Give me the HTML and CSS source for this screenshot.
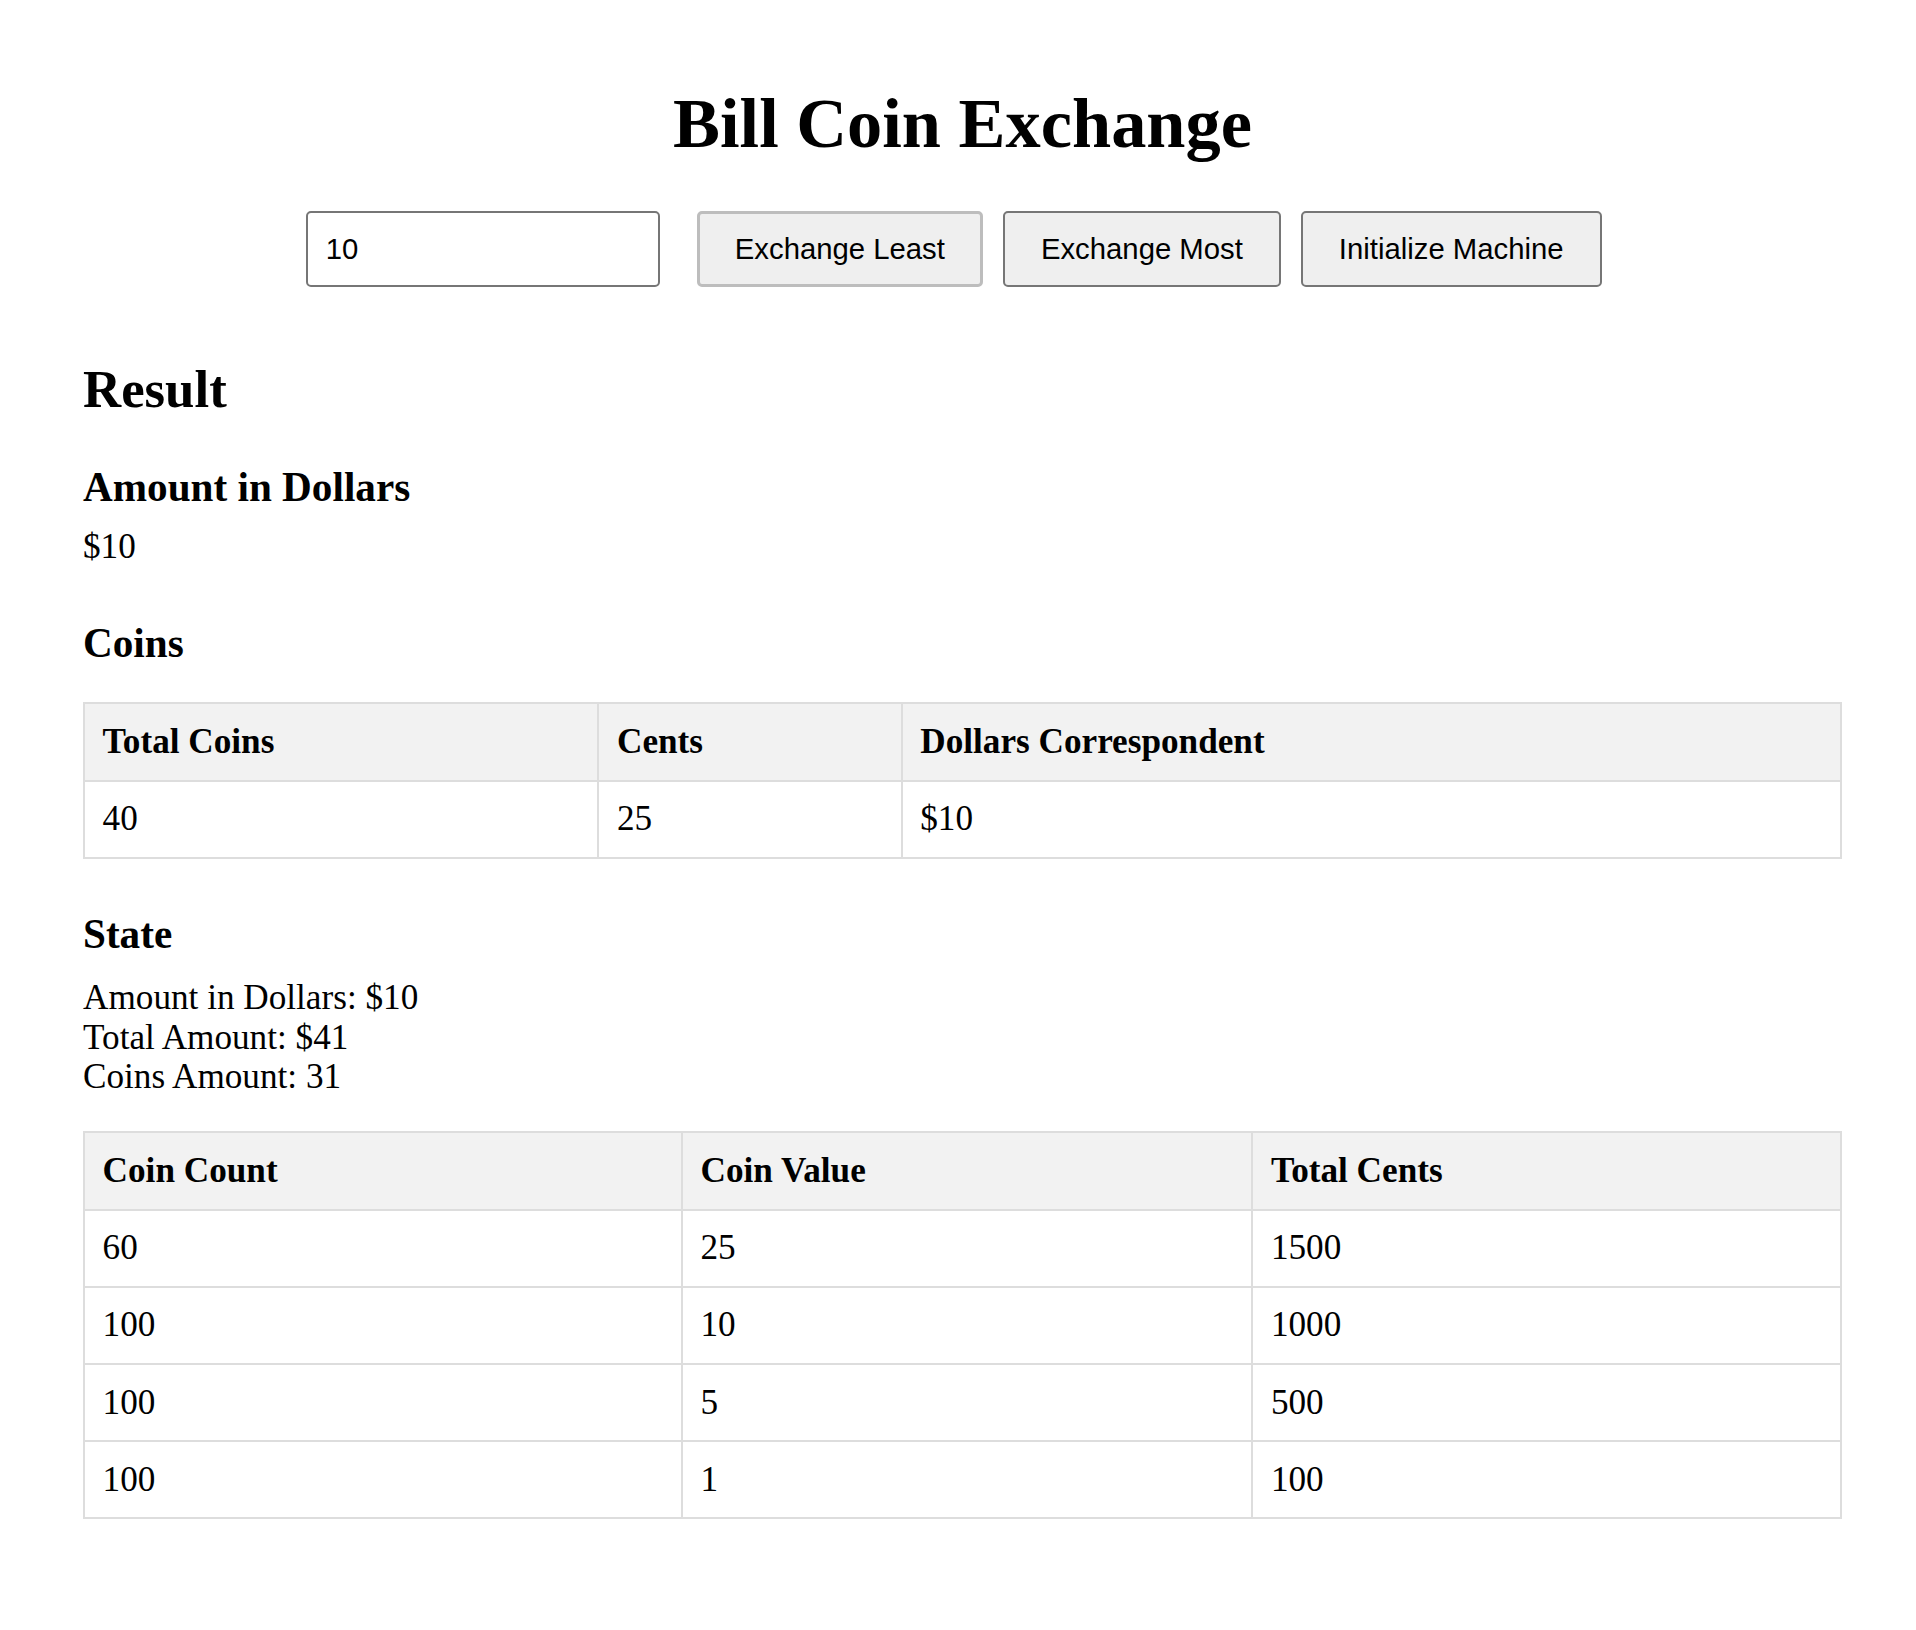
FILE: index.html
```html
<!DOCTYPE html>
<html lang="en">
<head>
<meta charset="utf-8">
<title>Bill Coin Exchange</title>
<link rel="stylesheet" href="styles.css">
</head>
<body>
<div class="page">
  <h1 class="title">Bill Coin Exchange</h1>
  <div class="controls">
    <input class="amount-input" type="text" value="10">
    <button class="btn btn-focused">Exchange Least</button>
    <button class="btn">Exchange Most</button>
    <button class="btn">Initialize Machine</button>
  </div>

  <h2 class="result-title">Result</h2>

  <h3 class="sub-title amount-title">Amount in Dollars</h3>
  <div class="value">$10</div>

  <h3 class="sub-title coins-title">Coins</h3>
  <table class="data-table coins-table">
    <thead>
      <tr><th>Total Coins</th><th>Cents</th><th>Dollars Correspondent</th></tr>
    </thead>
    <tbody>
      <tr><td>40</td><td>25</td><td>$10</td></tr>
    </tbody>
  </table>

  <h3 class="sub-title state-title">State</h3>
  <div class="state-lines">
    <div>Amount in Dollars: $10</div>
    <div>Total Amount: $41</div>
    <div>Coins Amount: 31</div>
  </div>

  <table class="data-table state-table">
    <thead>
      <tr><th>Coin Count</th><th>Coin Value</th><th>Total Cents</th></tr>
    </thead>
    <tbody>
      <tr><td>60</td><td>25</td><td>1500</td></tr>
      <tr><td>100</td><td>10</td><td>1000</td></tr>
      <tr><td>100</td><td>5</td><td>500</td></tr>
      <tr><td>100</td><td>1</td><td>100</td></tr>
    </tbody>
  </table>
</div>
</body>
</html>
```

FILE: styles.css
```css
html, body {
  background: #ffffff;
}

body {
  margin: 0;
  font-family: "Liberation Serif", "Times New Roman", serif;
  font-size: 35.2px;
  color: #000000;
}

.page {
  width: 1759px;
  margin-left: 83px;
  padding-bottom: 100px;
}

.title {
  margin: 0;
  padding-top: 82.8px;
  font-size: 70.4px;
  font-weight: bold;
  line-height: normal;
  text-align: center;
}

.controls {
  display: flex;
  justify-content: center;
  align-items: center;
  margin-top: 47.3px;
  padding-right: 17.6px;
}

.amount-input {
  box-sizing: border-box;
  width: 354px;
  height: 76px;
  margin: 0 37px 0 0;
  padding: 0 18px;
  border: 2px solid #767676;
  border-radius: 5px;
  background: #ffffff;
  font-family: "Liberation Sans", Arial, sans-serif;
  font-size: 29.3px;
  color: #000000;
  outline: none;
}

.btn {
  box-sizing: border-box;
  height: 76px;
  margin: 0 0 0 20px;
  padding: 0 36px;
  border: 2px solid #767676;
  border-radius: 5px;
  background: #efefef;
  font-family: "Liberation Sans", Arial, sans-serif;
  font-size: 29.3px;
  color: #000000;
  white-space: nowrap;
}

.btn-focused {
  margin-left: 0;
  padding: 0 35px;
  border: 3px solid #bdbdbd;
}

.result-title {
  margin: 71.8px 0 0;
  font-size: 52.8px;
  font-weight: bold;
  line-height: normal;
}

.sub-title {
  margin: 0;
  font-size: 41.2px;
  font-weight: bold;
  line-height: normal;
}

.amount-title {
  margin-top: 43.9px;
}

.value {
  margin-top: 16.7px;
  line-height: normal;
}

.coins-title {
  margin-top: 51.5px;
}

.data-table {
  width: 100%;
  border-collapse: collapse;
  margin-top: 35.5px;
}

.data-table th,
.data-table td {
  padding: 17.6px;
  border: 2px solid #dddddd;
  text-align: left;
  line-height: normal;
  font-size: 35.2px;
}

.data-table th {
  background: #f2f2f2;
  font-weight: bold;
}

.state-title {
  margin-top: 51px;
}

.state-lines {
  margin-top: 20px;
  line-height: 39.7px;
}

.state-table {
  margin-top: 34.5px;
}
```
